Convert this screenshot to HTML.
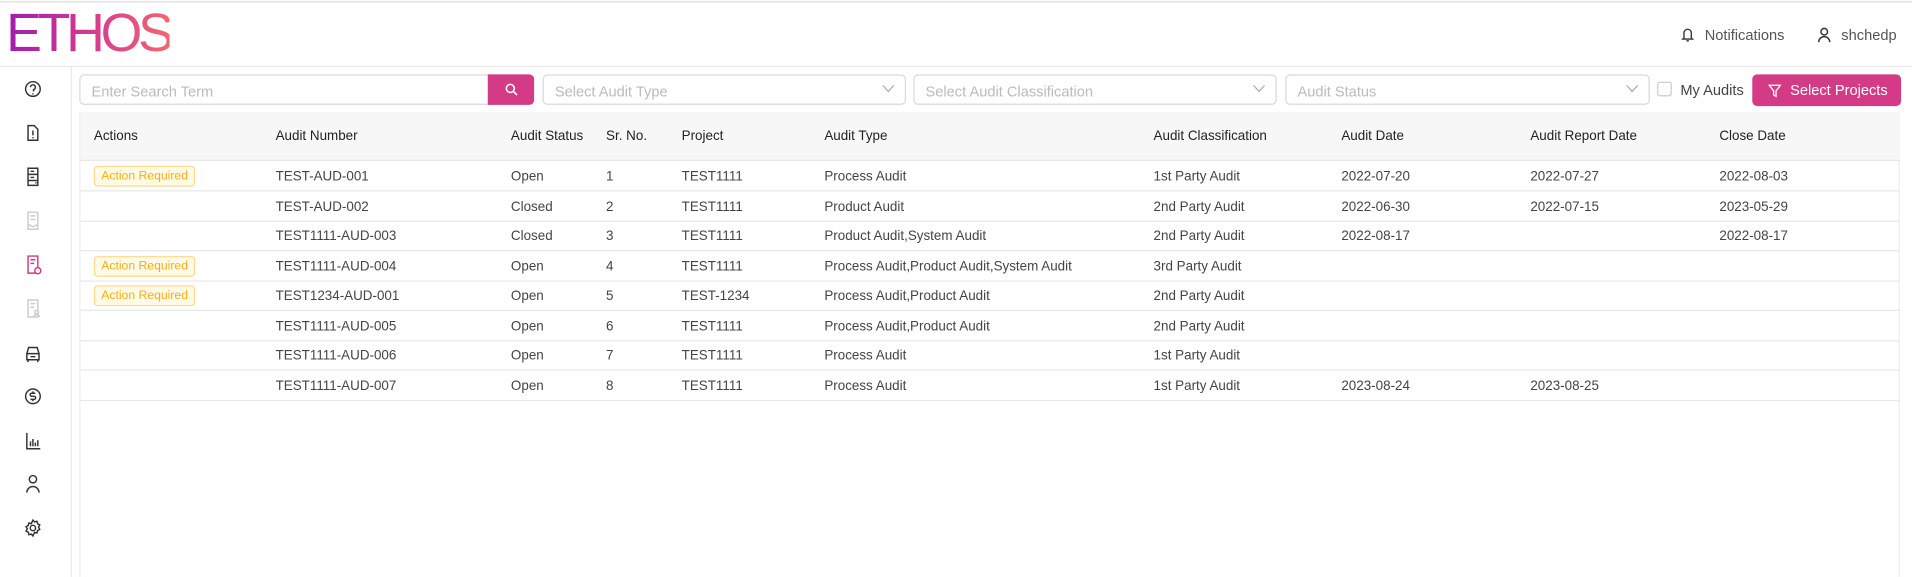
<!DOCTYPE html>
<html><head><meta charset="utf-8"><style>
html,body{margin:0;padding:0;width:1912px;height:576px;overflow:hidden;background:#fff}
#w{position:absolute;left:0;top:0;width:1568px;height:473px;transform:scale(1.2194);transform-origin:0 0;font-family:"Liberation Sans",sans-serif;color:#444}
.a{position:absolute}
.topline{left:0;top:1px;width:1568px;height:1px;background:#ddd}
.logo{left:5px;top:6px;font-size:44px;letter-spacing:-3.5px;font-weight:400;background:linear-gradient(90deg,#a21caf,#d63d8f 55%,#f26670);-webkit-background-clip:text;background-clip:text;color:transparent;line-height:44px}
.hb{left:0;top:54px;width:1568px;height:1px;background:#e8e8e8}
.sb{left:58px;top:55px;width:1px;height:418px;background:#e8e8e8}
.hd{font-size:12px;color:#555;top:22px}
.inp{border:1px solid #d9d9d9;border-radius:4px;height:25px;top:61px;box-sizing:border-box;font-size:12px;color:#bbb;padding:6px 9px;background:#fff}
.chev{position:absolute;right:8px;top:5px}
.btn{background:#d43a85;color:#fff;border-radius:4px}
.tbl{left:65px;top:92px;width:1493px;height:381px;border:1px solid #eee;border-bottom:none;box-sizing:border-box}
.th{left:66px;top:92px;width:1492px;height:39px;background:#f7f7f7;border-bottom:1px solid #e8e8e8}
.c{position:absolute;font-size:11px;white-space:nowrap}
.row{position:absolute;left:66px;width:1492px;height:24px;border-bottom:1px solid #e8e8e8}
.row .c{top:7px !important}
.tag{position:absolute;left:11px;top:4px;border:1px solid #ffd98a;background:#fffbe6;color:#faad14;border-radius:3px;font-size:10px;padding:2px 5px;line-height:11px}
svg{display:block}
</style></head><body><div id="w">
<div class="a topline"></div>
<div class="a logo">ETHOS</div>
<div class="a hb"></div>
<div class="a sb"></div>
<svg class="a" style="left:1378px;top:22px" width="12" height="13" viewBox="0 0 12 13" fill="none" stroke="#333" stroke-width="1.1"><path d="M3 9V5a3 3 0 0 1 6 0v4l1 1H2z M5 11.5h2"/></svg>
<div class="a hd" style="left:1398px">Notifications</div>
<svg class="a" style="left:1490px;top:22px" width="12" height="13" viewBox="0 0 12 13" fill="none" stroke="#333" stroke-width="1.2"><circle cx="6" cy="4" r="2.7"/><path d="M1.5 12.5a4.5 4.5 0 0 1 9 0"/></svg>
<div class="a hd" style="left:1510px">shchedp</div>
<svg class="a" style="left:19px;top:66px" width="16" height="380" viewBox="0 0 16 380" fill="none" stroke="#333" stroke-width="1.2">
<circle cx="8" cy="7" r="6"/><path d="M6 5.5a2 2 0 1 1 2.5 2V9M8 10.5v1"/>
<path d="M4 37h5l3 3v9H4z M8 41v4M8 46.5v1"/>
<path d="M4 72h8v14H4z M4 77h8M4 82h8M6 74.5h3M6 79.5h3M10 84h1"/>
<g stroke="#ccc"><path d="M4 108h8v14H4z M6 111h4M6 114h4M4 118l4 2 4-2"/></g>
<g stroke="#d43a85"><path d="M4 144h8v14H4z M6 147h4M6 150h3"/><circle cx="12" cy="156" r="2.5" fill="#fff"/></g>
<g stroke="#ccc"><path d="M4 180h8v14H4z M6 183h4M6 186h3"/><circle cx="11" cy="190" r="1.5"/><path d="M8.5 194a2.5 2 0 0 1 5 0"/></g>
<path d="M3 224l1.5-5h7l1.5 5v5H3z M3 224h10M4 229v2M12 229v2M6 226.5h4"/>
<circle cx="8" cy="259" r="6"/><path d="M10 256.5H7a1.2 1.2 0 0 0 0 2.5h2a1.2 1.2 0 0 1 0 2.5H6M8 255v1.5M8 261.5v1.5"/>
<path d="M3 289v13h11M6 300v-4M8 300v-6M10 300v-3M12 300v-5"/>
<circle cx="8" cy="327" r="3"/><path d="M3 338a5 5 0 0 1 10 0"/>
<circle cx="8" cy="367" r="2.2"/><path d="M8 360.5l1.3 1.5 2-.5.5 2 1.8 1-1 1.8 1 1.8-1.8 1-.5 2-2-.5L8 373.5l-1.3-1.5-2 .5-.5-2-1.8-1 1-1.8-1-1.8 1.8-1 .5-2 2 .5z"/>
</svg>
<div class="a inp" style="left:65px;width:340px;border-radius:4px 0 0 4px">Enter Search Term</div>
<div class="a btn" style="left:400px;top:61px;width:38px;height:25px;border-radius:0 4px 4px 0"><svg style="margin:7px 0 0 14px" width="11" height="11" viewBox="0 0 11 11" fill="none" stroke="#fff" stroke-width="1.3"><circle cx="4.5" cy="4.5" r="3.3"/><path d="M7 7l3 3"/></svg></div>
<div class="a inp" style="left:445px;width:298px">Select Audit Type<svg class="chev" width="11" height="11" viewBox="0 0 11 11" fill="none" stroke="#aaa"><path d="M1 3l4.5 5L10 3"/></svg></div>
<div class="a inp" style="left:749px;width:298px">Select Audit Classification<svg class="chev" width="11" height="11" viewBox="0 0 11 11" fill="none" stroke="#aaa"><path d="M1 3l4.5 5L10 3"/></svg></div>
<div class="a inp" style="left:1054px;width:299px">Audit Status<svg class="chev" width="11" height="11" viewBox="0 0 11 11" fill="none" stroke="#aaa"><path d="M1 3l4.5 5L10 3"/></svg></div>
<div class="a" style="left:1359px;top:67px;width:12px;height:12px;border:1px solid #ccc;border-radius:2px;box-sizing:border-box"></div>
<div class="a" style="left:1378px;top:67px;font-size:12px;color:#444">My Audits</div>
<div class="a btn" style="left:1437px;top:61px;width:122px;height:26px;font-size:12px;line-height:26px"><svg class="a" style="left:13px;top:8px" width="11" height="11" viewBox="0 0 11 11" fill="none" stroke="#fff" stroke-width="1.1"><path d="M1 1h9L6.5 5.5V10L4.5 9V5.5z"/></svg><span style="position:absolute;left:31px">Select Projects</span></div>
<div class="a tbl"></div>
<div class="a th">
<span class="c" style="left:11px;top:14px;color:#222">Actions</span>
<span class="c" style="left:160px;top:14px;color:#222">Audit Number</span>
<span class="c" style="left:353px;top:14px;color:#222">Audit Status</span>
<span class="c" style="left:431px;top:14px;color:#222">Sr. No.</span>
<span class="c" style="left:493px;top:14px;color:#222">Project</span>
<span class="c" style="left:610px;top:14px;color:#222">Audit Type</span>
<span class="c" style="left:880px;top:14px;color:#222">Audit Classification</span>
<span class="c" style="left:1034px;top:14px;color:#222">Audit Date</span>
<span class="c" style="left:1189px;top:14px;color:#222">Audit Report Date</span>
<span class="c" style="left:1344px;top:14px;color:#222">Close Date</span>
</div>
<div class="row" style="top:132px"><span class="tag">Action Required</span><span class="c" style="left:160px">TEST-AUD-001</span><span class="c" style="left:353px">Open</span><span class="c" style="left:431px">1</span><span class="c" style="left:493px">TEST1111</span><span class="c" style="left:610px">Process Audit</span><span class="c" style="left:880px">1st Party Audit</span><span class="c" style="left:1034px">2022-07-20</span><span class="c" style="left:1189px">2022-07-27</span><span class="c" style="left:1344px">2022-08-03</span></div>
<div class="row" style="top:157px"><span class="c" style="left:160px">TEST-AUD-002</span><span class="c" style="left:353px">Closed</span><span class="c" style="left:431px">2</span><span class="c" style="left:493px">TEST1111</span><span class="c" style="left:610px">Product Audit</span><span class="c" style="left:880px">2nd Party Audit</span><span class="c" style="left:1034px">2022-06-30</span><span class="c" style="left:1189px">2022-07-15</span><span class="c" style="left:1344px">2023-05-29</span></div>
<div class="row" style="top:181px"><span class="c" style="left:160px">TEST1111-AUD-003</span><span class="c" style="left:353px">Closed</span><span class="c" style="left:431px">3</span><span class="c" style="left:493px">TEST1111</span><span class="c" style="left:610px">Product Audit,System Audit</span><span class="c" style="left:880px">2nd Party Audit</span><span class="c" style="left:1034px">2022-08-17</span><span class="c" style="left:1344px">2022-08-17</span></div>
<div class="row" style="top:206px"><span class="tag">Action Required</span><span class="c" style="left:160px">TEST1111-AUD-004</span><span class="c" style="left:353px">Open</span><span class="c" style="left:431px">4</span><span class="c" style="left:493px">TEST1111</span><span class="c" style="left:610px">Process Audit,Product Audit,System Audit</span><span class="c" style="left:880px">3rd Party Audit</span></div>
<div class="row" style="top:230px"><span class="tag">Action Required</span><span class="c" style="left:160px">TEST1234-AUD-001</span><span class="c" style="left:353px">Open</span><span class="c" style="left:431px">5</span><span class="c" style="left:493px">TEST-1234</span><span class="c" style="left:610px">Process Audit,Product Audit</span><span class="c" style="left:880px">2nd Party Audit</span></div>
<div class="row" style="top:255px"><span class="c" style="left:160px">TEST1111-AUD-005</span><span class="c" style="left:353px">Open</span><span class="c" style="left:431px">6</span><span class="c" style="left:493px">TEST1111</span><span class="c" style="left:610px">Process Audit,Product Audit</span><span class="c" style="left:880px">2nd Party Audit</span></div>
<div class="row" style="top:279px"><span class="c" style="left:160px">TEST1111-AUD-006</span><span class="c" style="left:353px">Open</span><span class="c" style="left:431px">7</span><span class="c" style="left:493px">TEST1111</span><span class="c" style="left:610px">Process Audit</span><span class="c" style="left:880px">1st Party Audit</span></div>
<div class="row" style="top:304px"><span class="c" style="left:160px">TEST1111-AUD-007</span><span class="c" style="left:353px">Open</span><span class="c" style="left:431px">8</span><span class="c" style="left:493px">TEST1111</span><span class="c" style="left:610px">Process Audit</span><span class="c" style="left:880px">1st Party Audit</span><span class="c" style="left:1034px">2023-08-24</span><span class="c" style="left:1189px">2023-08-25</span></div>
</div></body></html>
